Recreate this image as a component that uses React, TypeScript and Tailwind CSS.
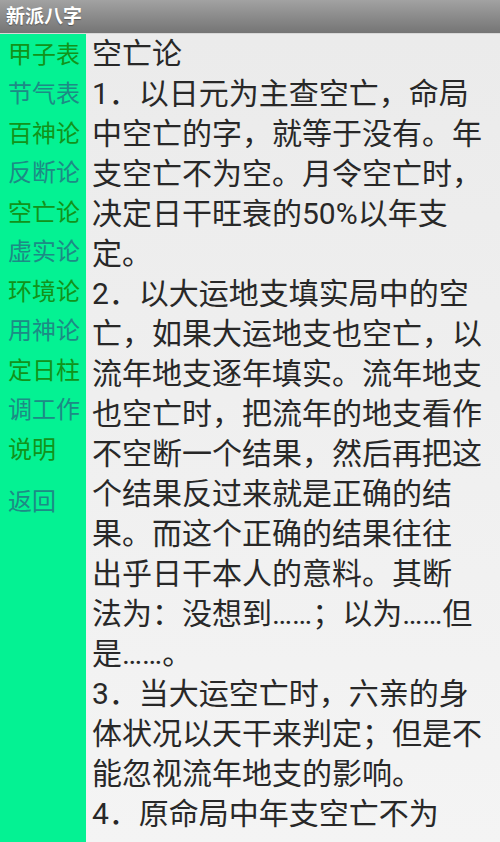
const menu = [
  { label: "甲子表", tone: "green" },
  { label: "节气表", tone: "teal" },
  { label: "百神论", tone: "green" },
  { label: "反断论", tone: "teal" },
  { label: "空亡论", tone: "green" },
  { label: "虚实论", tone: "teal" },
  { label: "环境论", tone: "green" },
  { label: "用神论", tone: "teal" },
  { label: "定日柱", tone: "green" },
  { label: "调工作", tone: "teal" },
  { label: "说明", tone: "green" },
];

// wrapped the way the device wraps it
const lines = [
  "空亡论",
  "1．以日元为主查空亡，命局",
  "中空亡的字，就等于没有。年",
  "支空亡不为空。月令空亡时，",
  "决定日干旺衰的50%以年支",
  "定。",
  "2．以大运地支填实局中的空",
  "亡，如果大运地支也空亡，以",
  "流年地支逐年填实。流年地支",
  "也空亡时，把流年的地支看作",
  "不空断一个结果，然后再把这",
  "个结果反过来就是正确的结",
  "果。而这个正确的结果往往",
  "出乎日干本人的意料。其断",
  "法为：没想到……；以为……但",
  "是……。",
  "3．当大运空亡时，六亲的身",
  "体状况以天干来判定；但是不",
  "能忽视流年地支的影响。",
  "4．原命局中年支空亡不为",
];

export default function App() {
  return (
    <div
      className="w-[500px] h-[842px] overflow-hidden flex flex-col"
      style={{ fontFamily: 'Roboto, "Noto Sans CJK SC", sans-serif' }}
    >
      {/* Title bar */}
      <div className="h-[34px] shrink-0 flex items-center px-[6px] bg-gradient-to-b from-[#a2a2a2] to-[#757575] border-b border-[#d8d8d8]">
        <span className="text-white text-[19px] font-bold leading-none [text-shadow:0_1px_1px_rgba(0,0,0,0.35)]">
          新派八字
        </span>
      </div>

      <div className="flex flex-1 min-h-0">
        {/* Side menu */}
        <div className="w-[86px] shrink-0 bg-[#04f293] flex flex-col pt-[1px] pl-[8px]">
          {menu.map((m) => (
            <div
              key={m.label}
              className={`h-[39.5px] flex items-center text-[24px] leading-none ${
                m.tone === "green" ? "text-[#12931a]" : "text-[#1d8b85]"
              }`}
            >
              {m.label}
            </div>
          ))}
          <div className="h-[39.5px] mt-[13px] flex items-center text-[24px] leading-none text-[#1d8b85]">
            返回
          </div>
        </div>

        {/* Article */}
        <div className="flex-1 bg-gradient-to-b from-[#ebebeb] to-[#f4f4f4] pl-[6px] text-[30px] leading-[40px] text-[#282828] overflow-hidden">
          {lines.map((l, i) => (
            <div key={i} className="whitespace-nowrap">
              {l}
            </div>
          ))}
        </div>
      </div>
    </div>
  );
}
